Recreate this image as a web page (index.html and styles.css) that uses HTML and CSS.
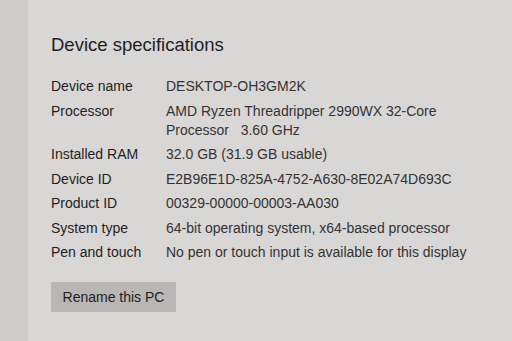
FILE: index.html
```html
<!DOCTYPE html>
<html lang="en">
<head>
  <meta charset="UTF-8" />
  <meta name="viewport" content="width=device-width, initial-scale=1.0" />
  <title>About</title>
  <link rel="stylesheet" href="styles.css">
</head>
<body>
  <div class="page">
    <div class="sidebar"></div>

    <div class="content">
      <h2>Device specifications</h2>

      <div class="specs">
        <div class="label">Device name</div>
        <div class="value">DESKTOP-OH3GM2K</div>

        <div class="label">Processor</div>
        <div class="value">AMD Ryzen Threadripper 2990WX 32-Core Processor&nbsp;&nbsp; 3.60 GHz</div>

        <div class="label">Installed RAM</div>
        <div class="value">32.0 GB (31.9 GB usable)</div>

        <div class="label">Device ID</div>
        <div class="value">E2B96E1D-825A-4752-A630-8E02A74D693C</div>

        <div class="label">Product ID</div>
        <div class="value">00329-00000-00003-AA030</div>

        <div class="label">System type</div>
        <div class="value">64-bit operating system, x64-based processor</div>

        <div class="label">Pen and touch</div>
        <div class="value">No pen or touch input is available for this display</div>
      </div>

      <button class="rename">Rename this PC</button>
    </div>
  </div>
</body>
</html>
```

FILE: styles.css
```css
body {
  margin: 0;
  font-family: 'Liberation Sans', Arial, sans-serif;
  background: #d9d7d6;
  color: #222;
}
.page {
  display: flex;
  height: 341px;
  overflow: hidden;
}
.sidebar {
  width: 28px;
  background: #cfcdcc;
}
.content {
  flex: 1;
  padding: 32px 0 0 23px;
}
.content h2 {
  margin: 0 0 20px;
  font-size: 18.5px;
  font-weight: normal;
  line-height: 25px;
  color: #1e1e1e;
}
.specs {
  display: grid;
  grid-template-columns: 115px 322px;
  row-gap: 5.5px;
  font-size: 14px;
  line-height: 19px;
}
.specs .label {
  color: #1e1e1e;
}
.specs .value {
  color: #333;
}
.rename {
  margin-top: 20px;
  width: 125px;
  height: 30px;
  padding: 0;
  background: #b9b7b6;
  border: none;
  font-family: inherit;
  font-size: 14px;
  color: #1e1e1e;
}
```
